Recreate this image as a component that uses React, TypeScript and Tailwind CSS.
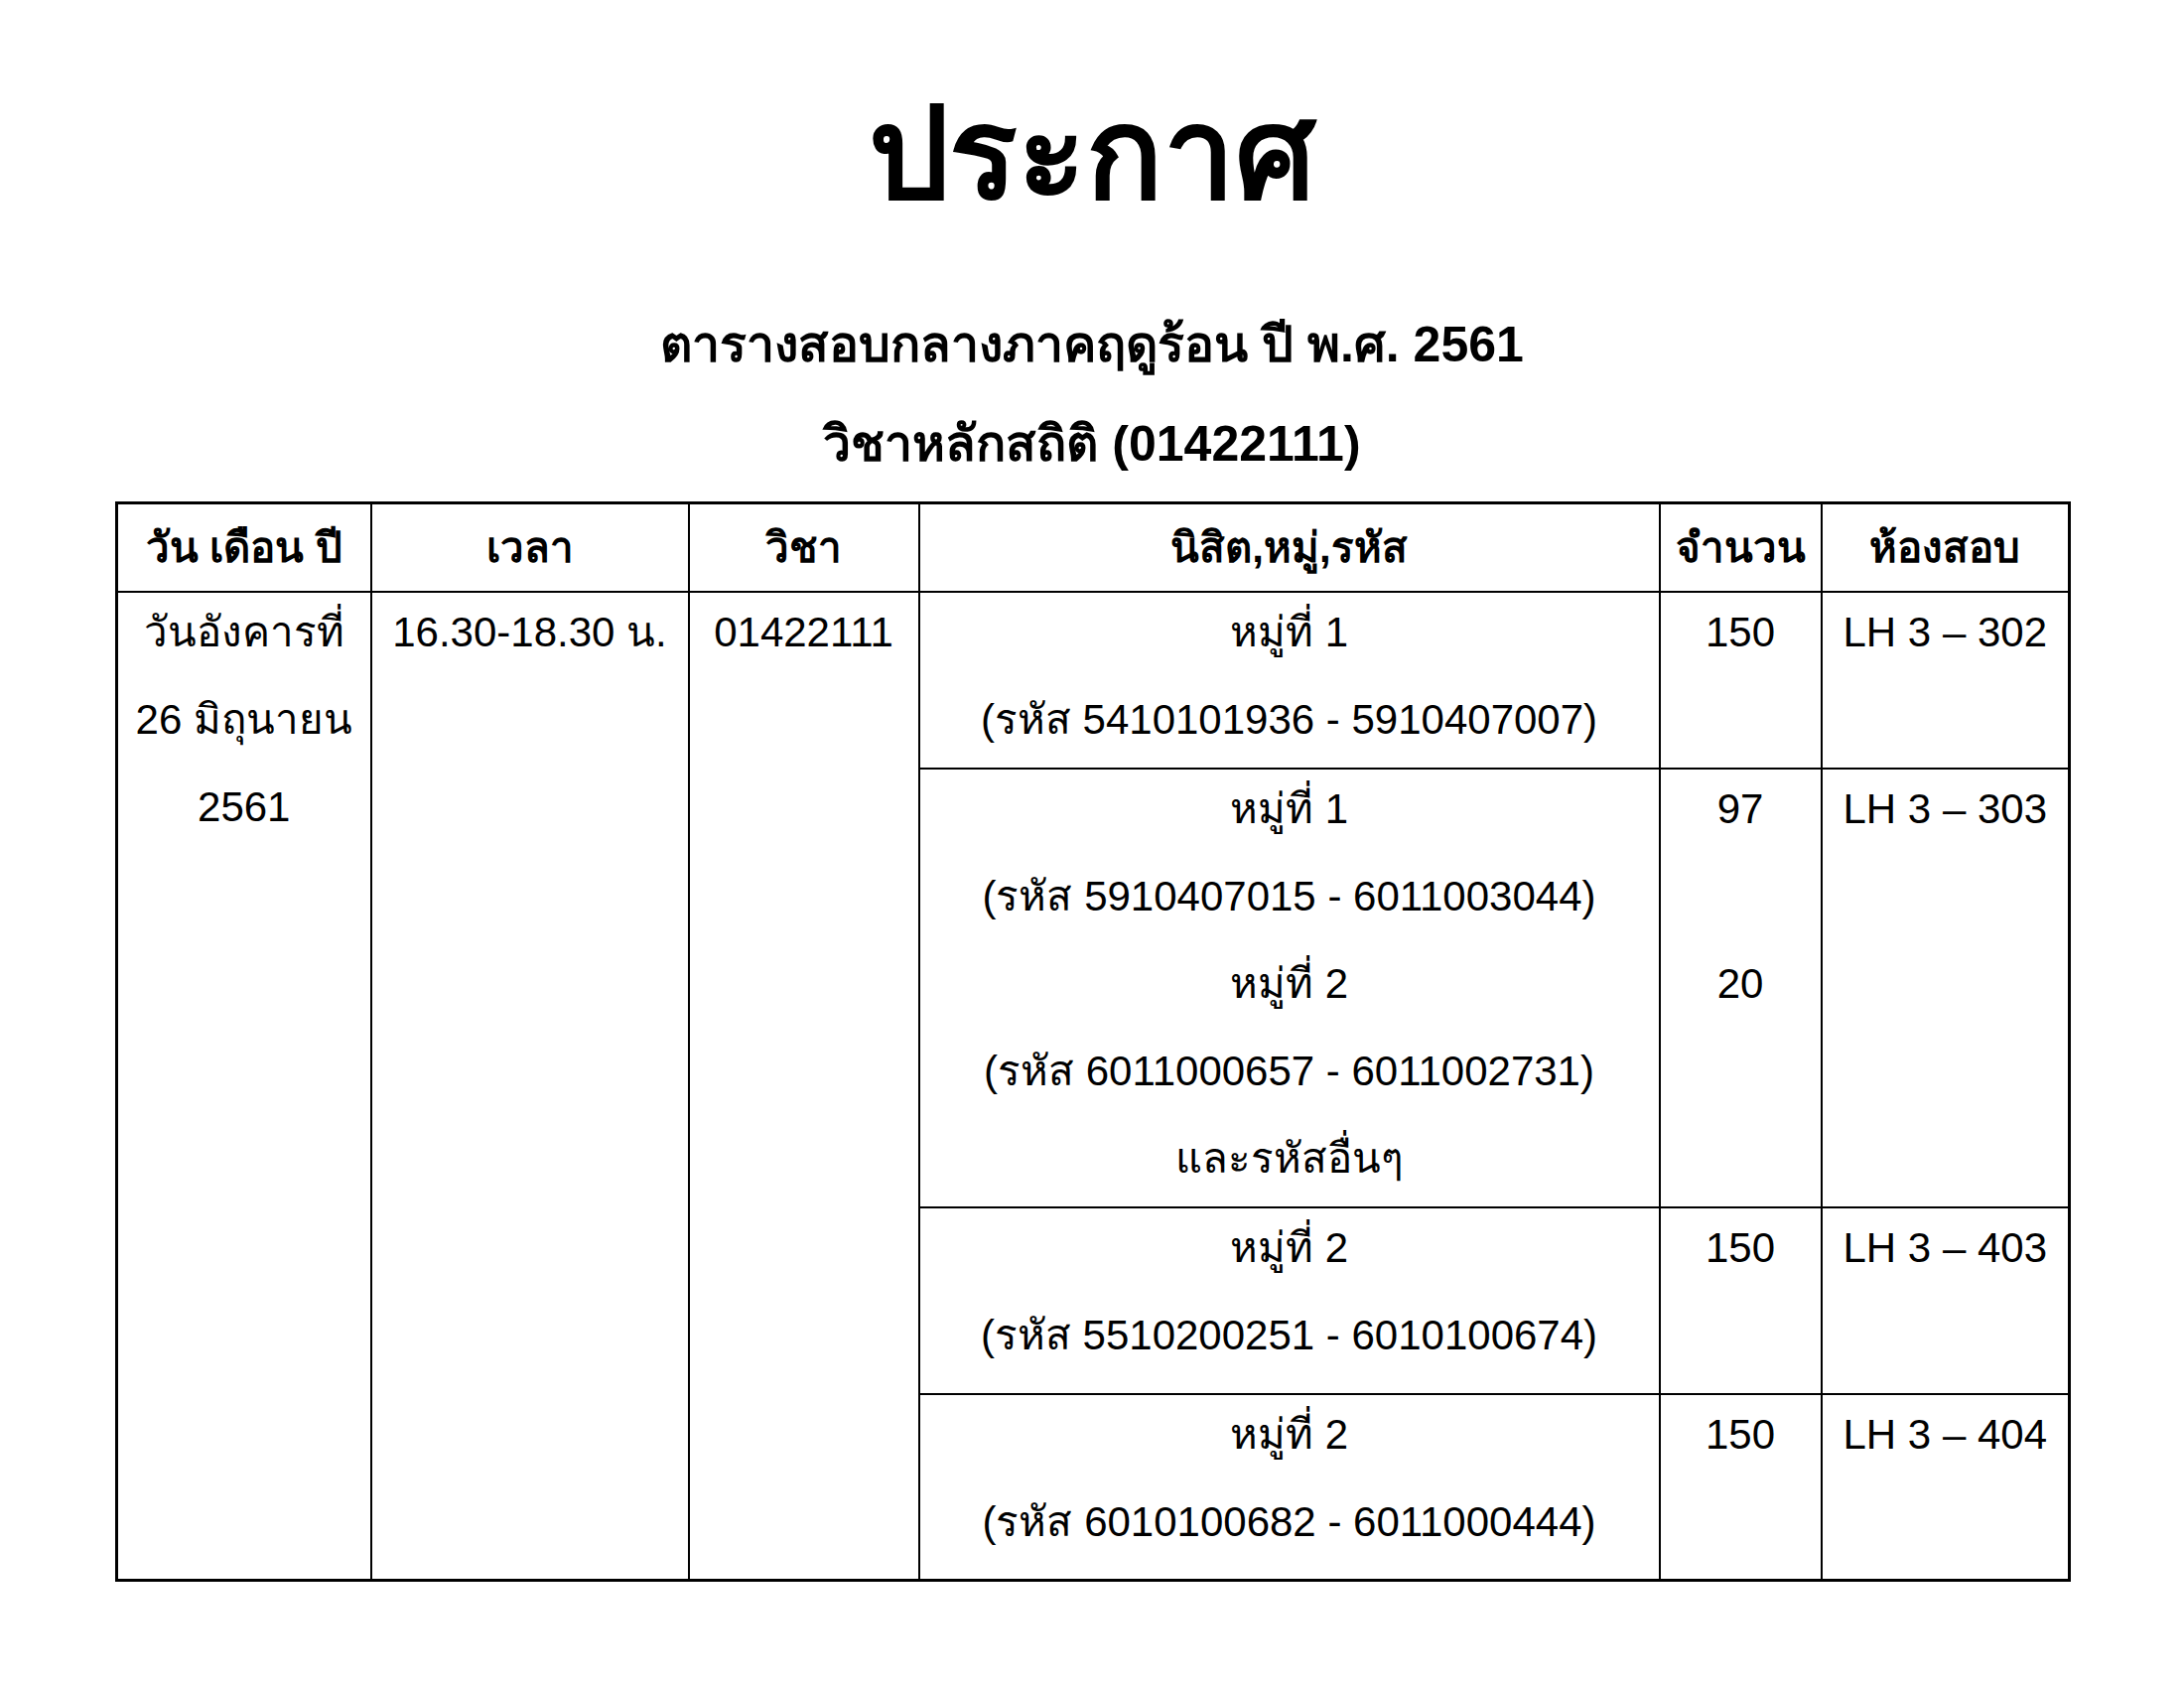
const font = { fontFamily: '"Liberation Sans", "Noto Sans", sans-serif' };

type Row = {
  height: string;
  lines: string[];
  counts: string[];
  room: string;
};

const rows: Row[] = [
  {
    height: 'h-[176px]',
    lines: ['หมู่ที่ 1', '(รหัส 5410101936 - 5910407007)'],
    counts: ['150'],
    room: 'LH 3 – 302',
  },
  {
    height: 'h-[434px]',
    lines: [
      'หมู่ที่ 1',
      '(รหัส 5910407015 - 6011003044)',
      'หมู่ที่ 2',
      '(รหัส 6011000657 - 6011002731)',
      'และรหัสอื่นๆ',
    ],
    counts: ['97', '', '20'],
    room: 'LH 3 – 303',
  },
  {
    height: 'h-[188px]',
    lines: ['หมู่ที่ 2', '(รหัส 5510200251 - 6010100674)'],
    counts: ['150'],
    room: 'LH 3 – 403',
  },
  {
    height: 'h-[188px]',
    lines: ['หมู่ที่ 2', '(รหัส 6010100682 - 6011000444)'],
    counts: ['150'],
    room: 'LH 3 – 404',
  },
];

const Lines = ({ items }: { items: string[] }) => (
  <>
    {items.map((t, i) => (
      <div key={i} className="h-[88px] leading-[80px] whitespace-nowrap">
        {t || '\u00a0'}
      </div>
    ))}
  </>
);

export default function App() {
  return (
    <div className="min-h-screen w-[2200px] bg-white text-black" style={font}>
      {/* heading */}
      <div className="flex flex-col items-center pt-[70px]">
        <h1 className="text-[128px] font-bold leading-[170px]">ประกาศ</h1>
        <h2 className="mt-[57px] text-[50px] font-bold leading-[100px]">
          ตารางสอบกลางภาคฤดูร้อน ปี พ.ศ. 2561
        </h2>
        <h2 className="text-[50px] font-bold leading-[100px]">วิชาหลักสถิติ (01422111)</h2>
      </div>

      {/* schedule table */}
      <div className="ml-[116px] mt-[8px]">
        <table className="table-fixed border-collapse border-[3px] border-black text-[42px]">
          <colgroup>
            <col className="w-[256px]" />
            <col className="w-[320px]" />
            <col className="w-[232px]" />
            <col className="w-[746px]" />
            <col className="w-[163px]" />
            <col className="w-[250px]" />
          </colgroup>
          <thead>
            <tr className="h-[89px] font-bold">
              <th className="border-2 border-black p-0 text-center">วัน เดือน ปี</th>
              <th className="border-2 border-black p-0 text-center">เวลา</th>
              <th className="border-2 border-black p-0 text-center">วิชา</th>
              <th className="border-2 border-black p-0 text-center">นิสิต,หมู่,รหัส</th>
              <th className="border-2 border-black p-0 text-center">จำนวน</th>
              <th className="border-2 border-black p-0 text-center">ห้องสอบ</th>
            </tr>
          </thead>
          <tbody>
            {rows.map((r, i) => (
              <tr key={i} className={r.height}>
                {i === 0 && (
                  <>
                    <td rowSpan={4} className="border-2 border-black p-0 align-top text-center">
                      <Lines items={['วันอังคารที่', '26 มิถุนายน', '2561']} />
                    </td>
                    <td rowSpan={4} className="border-2 border-black p-0 align-top text-center">
                      <Lines items={['16.30-18.30 น.']} />
                    </td>
                    <td rowSpan={4} className="border-2 border-black p-0 align-top text-center">
                      <Lines items={['01422111']} />
                    </td>
                  </>
                )}
                <td className="border-2 border-black p-0 align-top text-center">
                  <Lines items={r.lines} />
                </td>
                <td className="border-2 border-black p-0 align-top text-center">
                  <Lines items={r.counts} />
                </td>
                <td className="border-2 border-black p-0 align-top text-center">
                  <Lines items={[r.room]} />
                </td>
              </tr>
            ))}
          </tbody>
        </table>
      </div>
    </div>
  );
}
